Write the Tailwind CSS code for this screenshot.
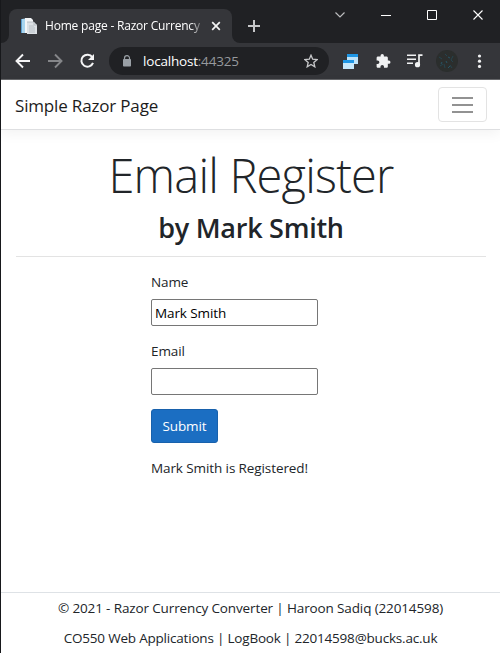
<!DOCTYPE html>
<html lang="en">
<head>
<meta charset="utf-8">
<title>Home page - Razor Currency Converter</title>
<script src="https://cdn.jsdelivr.net/npm/@tailwindcss/browser@4"></script>
</head>
<body class="w-[500px] h-[653px] overflow-hidden bg-white font-['Open_Sans','Noto_Sans',sans-serif] text-[#212529]">
<div class="flex flex-col w-[500px] h-[653px] border-l border-[#17181b]">
  <!-- Tab strip -->
  <div class="flex h-[43px] shrink-0 bg-[#202124] text-white">
    <div class="flex items-end w-2 bg-[#35363a]"><div class="w-2 h-[43px] bg-[#202124] rounded-br-lg"></div></div>
    <div class="mt-[9px] h-[34px] w-[223px] shrink-0 rounded-t-lg bg-[#35363a] flex items-center">
      <svg class="ml-[12px] w-4 h-4 shrink-0" viewBox="0 0 16 16"><path d="M0 1h5v14H0z" fill="#5b9dce"/><path d="M1 1l3-.6V15H1z" fill="#a9d5ee"/><path d="M4 0h6l2 2v13H4z" fill="#f4f6f8"/><path d="M6 4h7l3 3v9H6z" fill="#dde1e5"/><path d="M6 4h7v3h3" fill="none" stroke="#aeb5bb" stroke-width=".8"/><path d="M8 8h5M8 10h6M8 12h6M8 14h6" stroke="#b8c0c6"/></svg>
      <div class="ml-[8px] w-[158px] h-5 leading-5 overflow-hidden whitespace-nowrap text-[12px] tracking-[-0.2px] [mask-image:linear-gradient(to_right,black_145px,transparent_160px)]">Home page - Razor Currency Converter</div>
      <svg class="ml-[8px] w-[10px] h-[10px] shrink-0" viewBox="0 0 10 10"><path d="M1.2 1.2l7.6 7.6M8.8 1.2L1.2 8.800" stroke="#f4f4f4" stroke-width="1.700"/></svg>
    </div>
    <div class="w-2 bg-[#35363a]"><div class="w-2 h-[43px] bg-[#202124] rounded-bl-lg"></div></div>
    <svg class="w-[260px] h-[43px] shrink-0" viewBox="240 0 260 43" fill="none"><path d="M254 20v12M248 26h12" stroke="#c6c7c9" stroke-width="2"/><path d="M335.500 12.500l4.500 4.500 4.500-4.500" stroke="#bbbcbe" stroke-width="1.200"/><path d="M381 15.500h10M427.500 10.500h9v9h-9z" stroke="#fff"/><path d="M473.500 10.500l9 9M482.500 10.500l-9 9" stroke="#fff" stroke-width="1.100"/></svg>
  </div>
  <!-- Toolbar -->
  <div class="flex items-start h-[37px] shrink-0 bg-[#35363a] border-b border-[#66676a]">
    <svg class="w-[108px] h-9 shrink-0" viewBox="1 43 108 36" fill="none" stroke-width="1.900"><path d="M30 61H17.500M23 54.500L16.500 61l6.500 6.500" stroke="#f5f5f6"/><path d="M48 61h12.500M55 54.500l6.500 6.500-6.500 6.500" stroke="#858689"/><path d="M92.300 57.200A6 6 0 1 0 93 62.800" stroke="#f5f5f6" stroke-width="2"/><path d="M94 54v6h-6z" fill="#f5f5f6"/></svg>
    <div class="mt-1 flex items-center w-[220px] h-7 shrink-0 rounded-full bg-[#202124]">
      <svg class="ml-[14px] w-2 h-3 shrink-0" viewBox="0 0 8 12"><path d="M1.500 5V3.200a2.500 2.500 0 0 1 5 0V5" fill="none" stroke="#9aa0a6" stroke-width="1.200"/><rect y="4" width="8" height="7.500" rx=".8" fill="#9aa0a6"/></svg>
      <div class="ml-3 w-[149px] leading-5 text-[13.500px] tracking-[-0.2px] text-white">localhost<span class="text-[#96999d]">:44325</span></div>
      <svg class="ml-3 w-[14px] h-[14px] shrink-0" viewBox="0 0 14 14"><path d="M7 1.200l1.700 4 4.400.4-3.300 2.900 1 4.300L7 10.500l-3.800 2.300 1-4.300L.9 5.600l4.400-.4z" fill="none" stroke="#c7c8ca" stroke-width="1.300"/></svg>
    </div>
    <svg class="w-[170px] h-9 shrink-0" viewBox="329 43 170 36"><path d="M347 54h11v10h-11z" fill="#bde3fa"/><path d="M347 54h11v3h-11z" fill="#1e96e5"/><path d="M343 60h11v9h-11z" fill="#c5e8fc"/><path d="M343 60h11v3h-11z" fill="#1e96e5"/>
      <path transform="translate(375.300 53.300) scale(.66)" fill="#f1f2f3" d="M20.500 11H19V7c0-1.100-.9-2-2-2h-4V3.500a2.500 2.500 0 0 0-5 0V5H4c-1.100 0-2 .9-2 2v3.800h1.500a2.700 2.700 0 0 1 0 5.400H2V20c0 1.100.9 2 2 2h3.800v-1.500a2.700 2.700 0 0 1 5.400 0V22H17c1.100 0 2-.9 2-2v-4h1.500a2.500 2.500 0 0 0 0-5z"/>
      <path d="M407 55.200h9M407 59.200h9M407 63.200h6" stroke="#f1f2f3" stroke-width="1.600"/><path d="M419 65v-9.800h3.500" fill="none" stroke="#f1f2f3" stroke-width="1.700"/><circle cx="417.500" cy="64.700" r="2.600" fill="#f1f2f3"/>
      <circle cx="447" cy="61" r="11" fill="#2b2e2d"/><path d="M439 57l3 2m3-5l2 2m6 0l-2 4 2 2m-13 4l3-2m7 1l2 3m-8-4l1 4" stroke="#25444f" fill="none"/><path d="M441 64l1-2m6 6l2-2m-2-9l2 1m-4 3l1 2" stroke="#275565" fill="none"/>
      <g fill="#f1f2f3"><circle cx="479.500" cy="56" r="1.600"/><circle cx="479.500" cy="61.200" r="1.600"/><circle cx="479.500" cy="66.400" r="1.600"/></g></svg>
  </div>
  <!-- Site header -->
  <header class="flex items-center justify-between h-[50px] shrink-0 pl-[14px] pr-[13px] border-b border-[#dedfe1] shadow-[0_4px_12px_rgba(0,0,0,0.05)]">
    <a class="text-[17px] leading-6 tracking-[-0.17px] pt-[3px] text-[#1c1c1c] whitespace-nowrap">Simple Razor Page</a>
    <button class="flex flex-col items-center justify-center gap-[5px] w-[49px] h-[35px] border border-[#e3e3e3] rounded"><span class="w-[21px] h-[2px] bg-[#929292]"></span><span class="w-[21px] h-[2px] bg-[#929292]"></span><span class="w-[21px] h-[2px] bg-[#929292]"></span></button>
  </header>
  <!-- Page content -->
  <main class="flex-1 pl-[15px] pr-[14px] pt-[17px]">
    <h1 class="h-[58px] leading-[57px] text-center text-[47px] font-light tracking-[-0.8px] whitespace-nowrap">Email Register</h1>
    <h2 class="mt-[6px] h-[34px] leading-[33px] text-center text-[27px] font-semibold tracking-[-0.27px] whitespace-nowrap">by Mark Smith</h2>
    <hr class="mt-[11px] border-[#e3e3e3]">
    <form class="ml-[135px] mt-[15px] w-[167px] text-[13.500px] leading-[21px] tracking-[-0.1px]">
      <label class="block h-[21px]">Name</label>
      <input class="block mt-[6px] w-[167px] h-[27px] px-[3px] border border-[#767676] rounded-[2px] text-black tracking-[-0.1px]" value="Mark Smith">
      <label class="block mt-[15px] h-[21px]">Email</label>
      <input class="block mt-[6px] w-[167px] h-[27px] px-[3px] border border-[#767676] rounded-[2px]">
      <button type="button" class="block mt-[14px] w-[67px] h-[34px] rounded-[3px] bg-[#1b6ec2] border border-[#1861ac] text-white pt-px">Submit</button>
      <p class="mt-[15px] whitespace-nowrap">Mark Smith is Registered!</p>
    </form>
  </main>
  <footer class="h-[61px] shrink-0 border-t border-[#dee2e6] text-center text-[13.500px] leading-[21px] pt-[5px] whitespace-nowrap">
    <p class="tracking-[-0.13px]">© 2021 - Razor Currency Converter | Haroon Sadiq (22014598)</p>
    <p class="mt-[9px] tracking-[-0.2px]">CO550 Web Applications | LogBook | 22014598@bucks.ac.uk</p>
  </footer>
</div>
</body>
</html>
